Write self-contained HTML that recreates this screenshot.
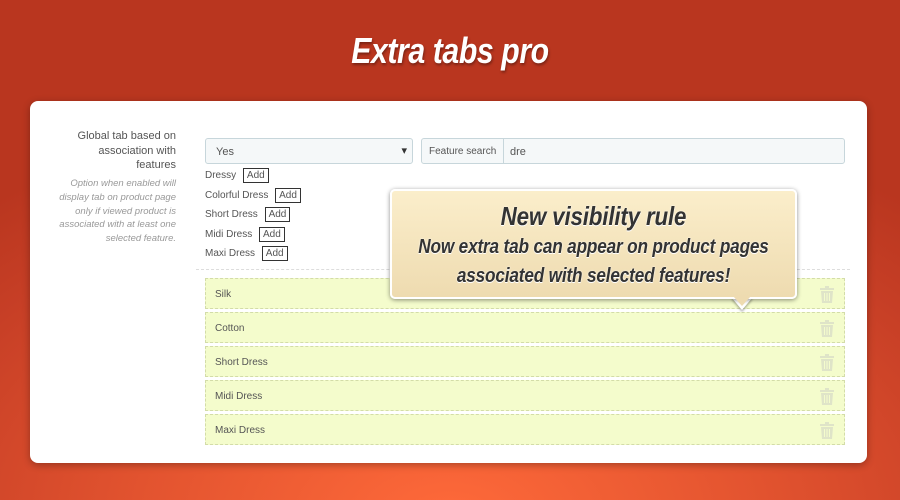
<!DOCTYPE html>
<html><head><style>
*{margin:0;padding:0;box-sizing:border-box}
body{width:900px;height:500px;overflow:hidden;position:relative;font-family:"Liberation Sans",sans-serif;
background:radial-gradient(ellipse 700px 420px at 450px 520px,#ff6a3a 0%,#e2532f 45%,#c73f26 80%,#b9361f 100%);}
h1{position:absolute;top:30px;width:100%;text-align:center;color:#fff;font:italic bold 36px "Liberation Sans",sans-serif;text-shadow:1px 2px 3px rgba(0,0,0,.35);transform:scaleX(0.84);letter-spacing:-0.5px}
.card{position:absolute;left:30px;top:101px;width:837px;height:362px;background:#fff;border-radius:8px;box-shadow:0 2px 8px rgba(0,0,0,.3)}
.lab{position:absolute;left:40px;top:28px;width:106px;text-align:right;font-size:11px;line-height:14.5px;color:#555}
.help{position:absolute;left:22px;top:76px;width:124px;text-align:right;font-size:9.5px;font-style:italic;line-height:13.8px;color:#999}
.sel{position:absolute;left:175px;top:37px;width:208px;height:26px;background:#f5f8f9;border:1px solid #c7d6db;border-radius:3px;font-size:11px;color:#555;padding:7px 0 0 10px}
.sel:after{content:"▾";position:absolute;right:5px;top:5px;font-size:11px;color:#333}
.fs{position:absolute;left:391px;top:37px;width:424px;height:26px;background:#f5f8f9;border:1px solid #c7d6db;border-radius:3px;font-size:10px;color:#555}
.fs span{display:inline-block;height:24px;padding:7px 7px 0;border-right:1px solid #c7d6db}
.fs b{font-weight:normal;position:absolute;left:88px;top:7px;font-size:11px}
.items{position:absolute;left:175px;top:66px;font-size:10px;color:#555}
.items div{height:19.5px;line-height:17px}
.items i{font-style:normal;border:1px solid #333;padding:1px 3px;margin-left:4px}
.hr{position:absolute;left:166px;top:168px;width:654px;border-top:1px dashed #ddd}
.row{position:absolute;left:175px;width:640px;height:31px;background:#f4fccc;border:1px dashed #d3dca8;font-size:10px;color:#555;padding:10px 0 0 9px}
.row svg{position:absolute;right:10px;top:7px}
.call{position:absolute;left:390px;top:189px;width:407px;height:110px;border-radius:5px;border:2px solid #fff;background:linear-gradient(#fbeecb,#eedbb0);box-shadow:0 1px 5px rgba(0,0,0,.45);text-align:center;color:#333;text-shadow:0 1px 0 #fff,0 0 2px #fff}
.call div{position:absolute;left:-100px;right:-100px;white-space:nowrap;font:italic bold 20px "Liberation Sans",sans-serif;transform:scaleX(0.86);letter-spacing:-0.2px}
.tip{position:absolute;left:731px;top:297px;width:0;height:0;border-left:11px solid transparent;border-right:11px solid transparent;border-top:13px solid #fff;filter:drop-shadow(0 2px 1px rgba(0,0,0,.3))}
.tip2{position:absolute;left:733px;top:296px;width:0;height:0;border-left:9px solid transparent;border-right:9px solid transparent;border-top:10px solid #eedbb0}
</style></head><body>
<h1>Extra tabs pro</h1>
<div class="card">
<div class="lab">Global tab based on association with features</div>
<div class="help">Option when enabled will display tab on product page only if viewed product is associated with at least one selected feature.</div>
<div class="sel">Yes</div>
<div class="fs"><span>Feature search</span><b>dre</b></div>
<div class="items"><div>Dressy <i>Add</i></div><div>Colorful Dress <i>Add</i></div><div>Short Dress <i>Add</i></div><div>Midi Dress <i>Add</i></div><div>Maxi Dress <i>Add</i></div></div>
<div class="hr"></div>
</div>
<div class="row" style="top:278px;left:205px">Silk<svg width="14" height="17" viewBox="0 0 14 17"><g fill="#dfe4c8"><rect x="0" y="2" width="14" height="2"/><rect x="5" y="0" width="4" height="2"/><path d="M1 5h12l-1 12H2z"/></g><g stroke="#f4fccc"><path d="M4.5 7v8M7 7v8M9.5 7v8"/></g></svg></div>
<div class="row" style="top:312px;left:205px">Cotton<svg width="14" height="17" viewBox="0 0 14 17"><g fill="#dfe4c8"><rect x="0" y="2" width="14" height="2"/><rect x="5" y="0" width="4" height="2"/><path d="M1 5h12l-1 12H2z"/></g><g stroke="#f4fccc"><path d="M4.5 7v8M7 7v8M9.5 7v8"/></g></svg></div>
<div class="row" style="top:346px;left:205px">Short Dress<svg width="14" height="17" viewBox="0 0 14 17"><g fill="#dfe4c8"><rect x="0" y="2" width="14" height="2"/><rect x="5" y="0" width="4" height="2"/><path d="M1 5h12l-1 12H2z"/></g><g stroke="#f4fccc"><path d="M4.5 7v8M7 7v8M9.5 7v8"/></g></svg></div>
<div class="row" style="top:380px;left:205px">Midi Dress<svg width="14" height="17" viewBox="0 0 14 17"><g fill="#dfe4c8"><rect x="0" y="2" width="14" height="2"/><rect x="5" y="0" width="4" height="2"/><path d="M1 5h12l-1 12H2z"/></g><g stroke="#f4fccc"><path d="M4.5 7v8M7 7v8M9.5 7v8"/></g></svg></div>
<div class="row" style="top:414px;left:205px">Maxi Dress<svg width="14" height="17" viewBox="0 0 14 17"><g fill="#dfe4c8"><rect x="0" y="2" width="14" height="2"/><rect x="5" y="0" width="4" height="2"/><path d="M1 5h12l-1 12H2z"/></g><g stroke="#f4fccc"><path d="M4.5 7v8M7 7v8M9.5 7v8"/></g></svg></div>
<div class="tip"></div>
<div class="call">
<div style="top:10px;font-size:26px">New visibility rule</div>
<div style="top:45px">Now extra tab can appear on product pages</div>
<div style="top:74px">associated with selected features!</div>
</div>
<div class="tip2"></div>
</body></html>
